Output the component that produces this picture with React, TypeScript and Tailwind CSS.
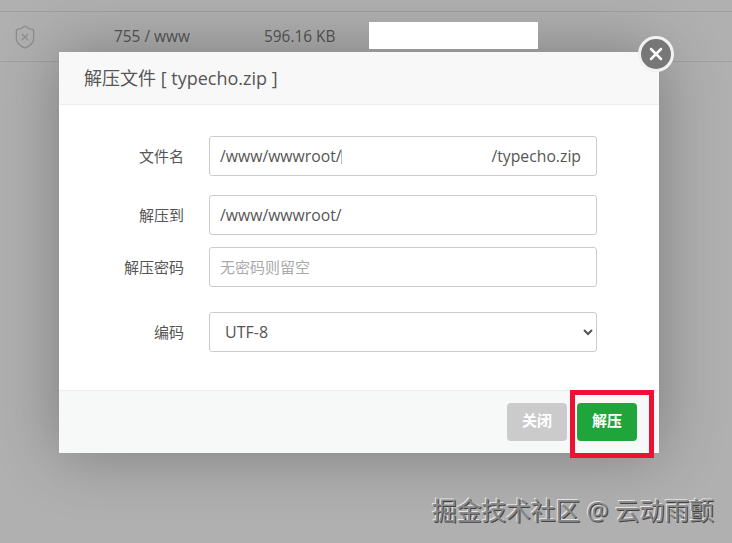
import { ShieldX, X } from "lucide-react";

const font = "[font-family:'Open_Sans','Noto_Sans_CJK_SC',sans-serif]";

const labelCls = "w-[125px] shrink-0 text-right text-[15px] text-[#555]";
const inputCls =
  "h-10 w-[388px] rounded-[3px] border border-[#ccc] bg-white px-[10px] text-[15.75px] text-[#555] outline-none placeholder:text-[15px] placeholder:text-[#aaa]";

const App = () => {
  return (
    <div className={`relative h-[543px] w-[732px] overflow-hidden bg-[#b0b0b0] ${font}`}>
      {/* page behind the overlay */}
      <div className="mt-[11px] flex h-[51px] items-center border-y border-[#a0a0a0] pl-[12px] text-[15.4px] text-[#555]">
        <ShieldX className="size-[26px] text-[#8e8e8e]" strokeWidth={1.2} />
        <span className="ml-[76px] w-[150px]">755 / www</span>
        <span className="w-[105px]">596.16 KB</span>
        <div className="relative z-10 mb-[2px] h-[27px] w-[169px] bg-white" />
      </div>

      {/* dialog */}
      <div className="absolute top-[52px] left-[59px] flex h-[401px] w-[600px] flex-col bg-white shadow-[0_0_60px_rgba(0,0,0,0.3)]">
        <div className="flex h-[53px] items-center border-b border-[#eee] bg-[#f8f8f8] pl-[25px] text-[18px] text-[#555]">
          解压文件 [ typecho.zip ]
        </div>

        <div className="flex flex-1 flex-col pt-[31px]">
          <div className="flex items-center gap-[25px]">
            <label className={labelCls}>文件名</label>
            <div className="relative">
              <input className={inputCls} readOnly value="/www/wwwroot/" />
              {/* leftovers of the blanked part of the path */}
              <span className="absolute top-[13px] left-[132px] h-[15px] w-px bg-[#bbb]" />
              <span className="absolute top-[9px] right-[16px] text-[15.75px] text-[#555]">/typecho.zip</span>
            </div>
          </div>
          <div className="mt-[19px] flex items-center gap-[25px]">
            <label className={labelCls}>解压到</label>
            <input className={inputCls} readOnly value="/www/wwwroot/" />
          </div>
          <div className="mt-[12px] flex items-center gap-[25px]">
            <label className={labelCls}>解压密码</label>
            <input className={inputCls} placeholder="无密码则留空" />
          </div>
          <div className="mt-[25px] flex items-center gap-[25px]">
            <label className={labelCls}>编码</label>
            <select className="h-10 w-[388px] rounded-[3px] border border-[#ccc] bg-white pl-[11px] text-[16px] text-[#555] outline-none">
              <option>UTF-8</option>
            </select>
          </div>
        </div>

        <div className="flex h-[63px] items-start justify-end gap-[10px] border-t border-[#eee] bg-[#f7f9f9] pt-[12px] pr-[22px]">
          <button className="h-[38px] w-[60px] rounded-[4px] bg-[#cbcbcb] pb-[4px] text-[15px] font-bold text-white">关闭</button>
          <button className="h-[38px] w-[60px] rounded-[4px] bg-[#20a53a] pb-[4px] text-[15px] font-bold text-white">解压</button>
        </div>
      </div>

      {/* close button over the dialog corner */}
      <div className="absolute top-[36px] left-[638px] flex size-[36px] items-center justify-center rounded-full border-[3px] border-[#f2f2f2] bg-[#777]">
        <X className="size-[20px] text-white" strokeWidth={3} />
      </div>

      {/* red highlight */}
      <div className="absolute top-[390px] left-[570px] h-[68px] w-[84px] border-[5px] border-[#ee1133]" />

      {/* watermark */}
      <div className="absolute top-[494px] left-[432px] text-[24.7px] leading-[34px] whitespace-nowrap text-[#8a8a8a] [text-shadow:1px_1px_0_#444,-1px_-1px_0_#e4e4e4]">
        掘金技术社区 @ 云动雨颤
      </div>
    </div>
  );
};

export default App;
